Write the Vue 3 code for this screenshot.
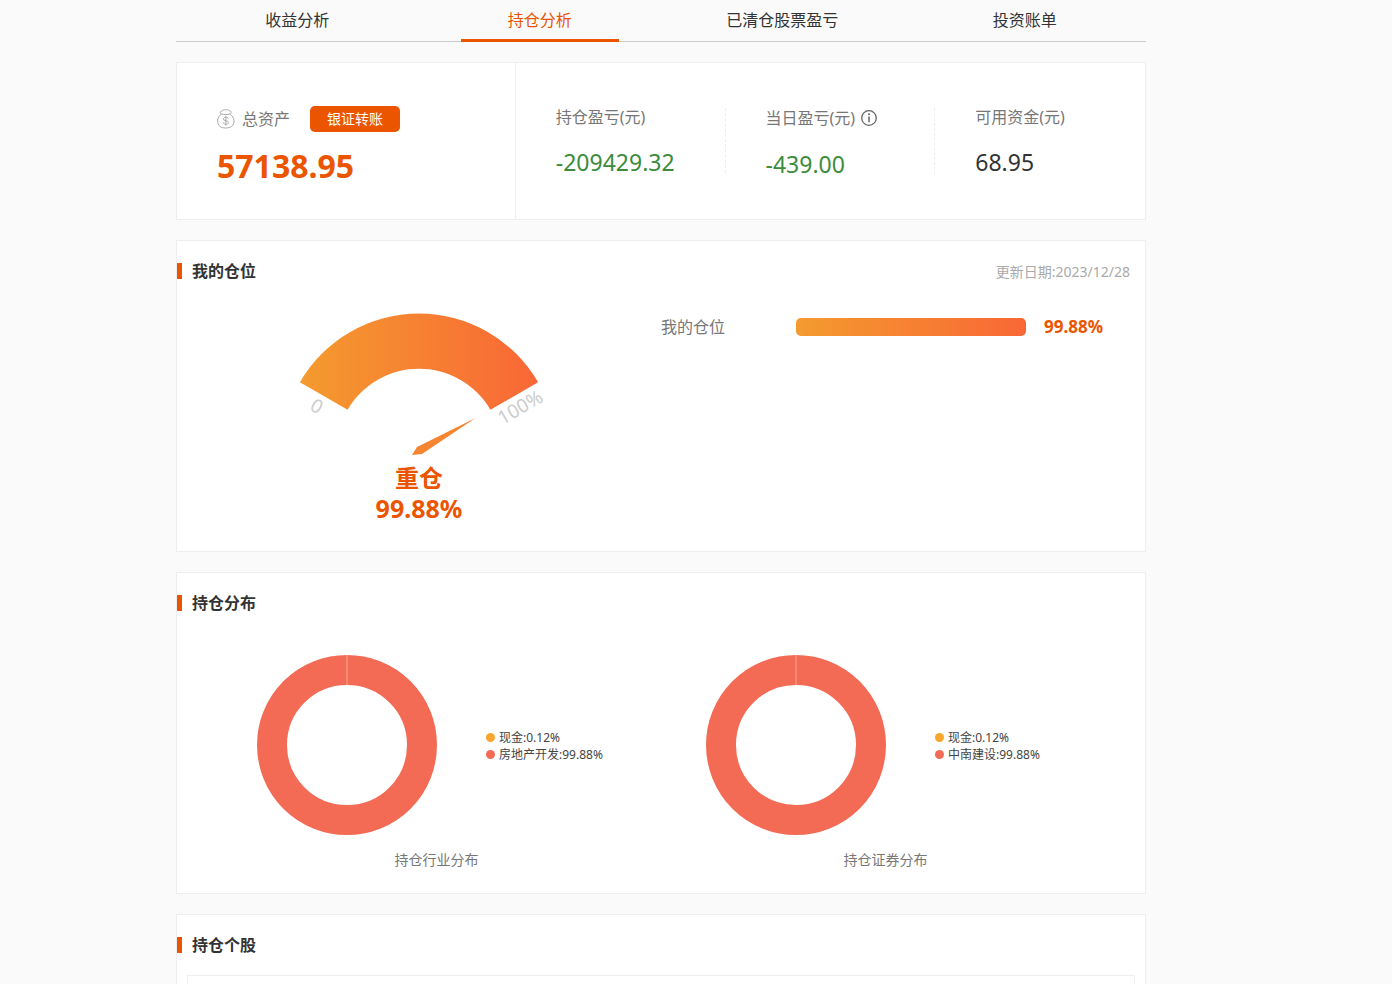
<script setup>
const tabs = ['收益分析', '持仓分析', '已清仓股票盈亏', '投资账单']
const activeTab = '持仓分析'

const stats = [
  { label: '持仓盈亏(元)', value: '-209429.32', loss: true },
  { label: '当日盈亏(元)', value: '-439.00', loss: true, info: true },
  { label: '可用资金(元)', value: '68.95' },
]

const charts = [
  {
    title: '持仓行业分布',
    legend: [
      { text: '现金:0.12%', kind: 'cash' },
      { text: '房地产开发:99.88%', kind: 'stock' },
    ],
  },
  {
    title: '持仓证券分布',
    legend: [
      { text: '现金:0.12%', kind: 'cash' },
      { text: '中南建设:99.88%', kind: 'stock' },
    ],
  },
]
</script>

<template>
  <div class="page">
    <main class="container">
      <nav class="tabs">
        <div v-for="tab in tabs" :key="tab" class="tab-cell">
          <a href="#" class="tab" :class="{ active: tab === activeTab }">{{ tab }}</a>
        </div>
      </nav>

      <section class="card summary">
        <div class="total">
          <div class="total-head">
            <svg class="bag" viewBox="0 0 18 20" width="18" height="20" aria-hidden="true">
              <path d="M4.2 4.9C2.6 3.9 3 2.2 4.8 2.1C5.6 0.6 7.4 0.3 8.6 1C10 0.2 11.8 0.7 12.3 1.8C14.4 1.7 15 3.6 13.3 4.8C10.5 5.9 7 5.9 4.2 4.9Z" />
              <path d="M4.6 5.2C2 6.6 0.6 9 0.6 12C0.6 16.6 3.6 19 8.7 19C13.8 19 17 16.6 17 12C17 9 15.4 6.6 13 5.2" />
              <path d="M11.4 9.6C11 8.6 10 8.2 8.9 8.2C7.4 8.2 6.4 8.9 6.4 10C6.4 12.4 11.5 10.9 11.5 13.4C11.5 14.6 10.4 15.3 9 15.3C7.6 15.3 6.5 14.7 6.2 13.6M8.9 6.9V16.5" />
            </svg>
            <span class="label total-label">总资产</span>
            <button type="button" class="transfer">银证转账</button>
          </div>
          <div class="total-value">57138.95</div>
        </div>
        <div class="stats">
          <div v-for="s in stats" :key="s.label" class="stat">
            <div class="label stat-label" :class="{ tall: s.info }">
              <span>{{ s.label }}</span>
              <svg v-if="s.info" viewBox="0 0 16 16" width="16" height="16" aria-hidden="true">
                <circle cx="8" cy="8" r="7.3" fill="none" stroke="#666" stroke-width="1.3" />
                <path d="M8 6.5V12.2" stroke="#666" stroke-width="1.5" />
                <circle cx="8" cy="4.3" r="1" fill="#666" />
              </svg>
            </div>
            <div class="stat-value" :class="{ loss: s.loss }">{{ s.value }}</div>
          </div>
        </div>
      </section>

      <section class="card">
        <header class="card-head">
          <h2>我的仓位</h2>
          <span class="date">更新日期:2023/12/28</span>
        </header>
        <div class="position">
          <div class="gauge">
            <svg viewBox="0 0 260 150" width="260" height="150" aria-hidden="true">
              <defs>
                <linearGradient id="heat" x1="0" y1="0" x2="1" y2="0">
                  <stop offset="0" stop-color="#f49b2e" />
                  <stop offset="1" stop-color="#f96736" />
                </linearGradient>
              </defs>
              <path
                d="M10.9 69.3A137.5 137.5 0 0 1 249.1 69.3L201.4 96.8A82.5 82.5 0 0 0 58.6 96.8Z"
                fill="url(#heat)"
              />
              <path d="M186.500 105L128 134L123 142L133 141Z" fill="#f58531" />
              <text transform="translate(28 93) rotate(30)" text-anchor="middle" dominant-baseline="central">0</text>
              <text transform="translate(231 94) rotate(-30)" text-anchor="middle" dominant-baseline="central">100%</text>
            </svg>
            <div class="gauge-state">重仓</div>
            <div class="gauge-value">99.88%</div>
          </div>
          <div class="level">
            <span class="label level-name">我的仓位</span>
            <span class="level-bar"></span>
            <span class="level-value">99.88%</span>
          </div>
        </div>
      </section>

      <section class="card">
        <header class="card-head">
          <h2>持仓分布</h2>
        </header>
        <div class="charts">
          <figure v-for="c in charts" :key="c.title" class="chart">
            <div class="chart-body">
              <svg viewBox="0 0 180 180" width="180" height="180" aria-hidden="true">
                <circle cx="90" cy="90" r="75" fill="none" stroke="#f36b55" stroke-width="30" />
                <path d="M90 0V30" stroke="#f68a70" stroke-width="2" />
              </svg>
              <ul class="legend">
                <li v-for="l in c.legend" :key="l.text" :class="l.kind">{{ l.text }}</li>
              </ul>
            </div>
            <figcaption>{{ c.title }}</figcaption>
          </figure>
        </div>
      </section>

      <section class="card">
        <header class="card-head">
          <h2>持仓个股</h2>
        </header>
        <div class="holdings"></div>
      </section>
    </main>
  </div>
</template>

<style>
body {
  background: #fafafa;
}
</style>

<style scoped>
.page {
  box-sizing: border-box;
  height: 100vh;
  overflow: hidden;
  padding-right: 70px;
  background: #fafafa;
  color: #333;
  font-family: "Noto Sans", "Noto Sans CJK SC", sans-serif;
  font-size: 16px;
}
.container {
  max-width: 970px;
  margin: 0 auto;
}
.tabs {
  display: flex;
  border-bottom: 1px solid #ccc;
}
.tab-cell {
  flex: 1;
  display: flex;
  justify-content: center;
}
.tab {
  width: 158px;
  margin-bottom: -1px;
  padding-top: 2px;
  border-bottom: 3px solid transparent;
  line-height: 37px;
  text-align: center;
  text-decoration: none;
  color: #333;
}
.tab.active {
  color: #eb5500;
  border-color: #eb5500;
}
.card {
  margin-top: 20px;
  background: #fff;
  border: 1px solid #eee;
}
.summary {
  display: flex;
}
.label {
  color: #777;
}
.total {
  box-sizing: border-box;
  width: 35%;
  padding: 43px 0 33px 40px;
  border-right: 1px solid #eee;
}
.total-head {
  display: flex;
  align-items: center;
  height: 26px;
}
.bag {
  fill: none;
  stroke: #aaa;
  stroke-width: 1;
}
.total-label {
  margin: 0 20px 0 7px;
  line-height: 26px;
}
.transfer {
  width: 90px;
  height: 26px;
  padding: 0;
  border: 0;
  border-radius: 5px;
  background: #eb5500;
  color: #fff;
  font-family: inherit;
  font-size: 14px;
  line-height: 26px;
}
.total-value {
  margin-top: 14px;
  font-size: 32px;
  font-weight: 700;
  line-height: 40px;
  color: #eb5500;
}
.stats {
  flex: 1;
  display: grid;
  grid-template-columns: repeat(3, 1fr);
  align-items: start;
  padding-top: 45px;
}
.stat {
  padding: 0 0 1px 40px;
  border-right: 1px dashed #eee;
}
.stat:last-child {
  border-right: 0;
}
.stat-label {
  display: flex;
  align-items: center;
  gap: 6px;
  height: 18px;
  line-height: 18px;
}
.stat-label.tall {
  height: 20px;
}
.stat-value {
  margin-top: 26px;
  font-size: 23px;
  line-height: 20px;
}
.stat-value.loss {
  color: #3c8c3c;
}
.card-head {
  display: flex;
  align-items: center;
  justify-content: space-between;
  height: 60px;
  padding-right: 15px;
}
h2 {
  display: flex;
  align-items: center;
  gap: 10px;
  margin: 0;
  font-size: 16px;
  line-height: 24px;
}
h2::before {
  content: "";
  width: 5px;
  height: 16px;
  background: #eb5500;
}
.date {
  font-size: 14px;
  color: #aaa;
}
.position {
  display: flex;
  align-items: flex-start;
  padding: 12px 0 28px;
}
.gauge {
  width: 50%;
  display: flex;
  flex-direction: column;
  align-items: center;
  font-weight: 700;
  line-height: 30px;
  color: #eb5500;
}
.gauge text {
  font-size: 19px;
  font-weight: 400;
  fill: #ccc;
}
.gauge-state {
  font-size: 24px;
}
.gauge-value {
  font-size: 25px;
}
.level {
  flex: 1;
  display: flex;
  align-items: center;
  height: 24px;
  padding-top: 2px;
}
.level-name {
  width: 135px;
  line-height: 24px;
}
.level-bar {
  width: 230px;
  height: 18px;
  margin-right: 18px;
  border-radius: 5px;
  background: linear-gradient(90deg, #f49b2e, #f96736);
}
.level-value {
  font-size: 17px;
  font-weight: 700;
  line-height: 24px;
  color: #eb5500;
}
.charts {
  display: flex;
  padding: 22px 35px;
}
.chart {
  flex: 1;
  margin: 0;
}
.chart-body {
  display: flex;
  align-items: center;
  padding-left: 45px;
}
.legend {
  margin: 2px 0 0 49px;
  padding: 0;
  list-style: none;
}
.legend li {
  display: flex;
  align-items: center;
  gap: 4px;
  font-size: 12px;
  line-height: 17px;
  color: #444;
}
.legend li::before {
  content: "";
  width: 9px;
  height: 9px;
  border-radius: 50%;
  background: #f36b55;
}
.legend li.cash::before {
  background: #faa52d;
}
figcaption {
  margin-top: 14px;
  font-size: 14px;
  line-height: 22px;
  text-align: center;
  color: #777;
}
.holdings {
  min-height: 200px;
  margin: 0 10px 10px;
  border: 1px solid #eee;
}
</style>
